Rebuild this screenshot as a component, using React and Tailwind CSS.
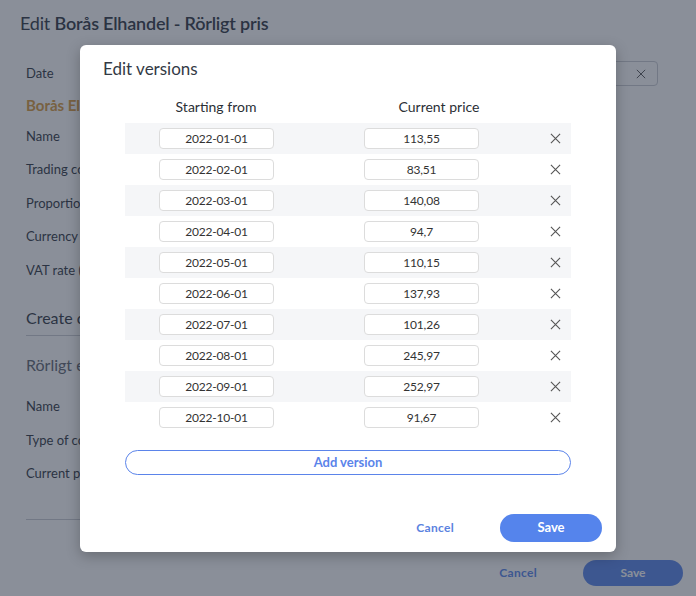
const versions = [
  ['2022-01-01', '113,55'],
  ['2022-02-01', '83,51'],
  ['2022-03-01', '140,08'],
  ['2022-04-01', '94,7'],
  ['2022-05-01', '110,15'],
  ['2022-06-01', '137,93'],
  ['2022-07-01', '101,26'],
  ['2022-08-01', '245,97'],
  ['2022-09-01', '252,97'],
  ['2022-10-01', '91,67'],
]

function CloseIcon({ className = '' }) {
  return (
    <svg viewBox="0 0 12 12" className={className} fill="none" stroke="currentColor" strokeWidth="1.2">
      <path d="M1 1l10 10M11 1L1 11" />
    </svg>
  )
}

function Field({ label }) {
  return <div className="h-[33.5px] flex items-center text-[13px] text-[#2d3440]">{label}</div>
}

function EditPage() {
  return (
    <div className="px-[26px]">
      <h1 className="pt-[11px] -ml-[6px] text-[18px] tracking-[-0.2px] text-[#2d3440] leading-[24px]">
        Edit <span className="font-semibold">Borås Elhandel - Rörligt pris</span>
      </h1>
      <div className="mt-[26px] flex items-center justify-between">
        <span className="text-[13px] text-[#2d3440]">Date</span>
        <div className="w-[80px] h-[25px] mr-[12px] border border-[#c9ccd2] rounded flex items-center justify-end pr-[11px]">
          <CloseIcon className="w-[10px] h-[10px] text-[#555]" />
        </div>
      </div>
      <div className="mt-[8px] text-[15px] font-bold text-[#d79a3c]">Borås Elhandel</div>
      <div className="mt-[3px]">
        <Field label="Name" />
        <Field label="Trading company" />
        <Field label="Proportion" />
        <Field label="Currency" />
        <Field label="VAT rate (%)" />
      </div>
      <div className="mt-[19px] w-[540px] text-[16px] text-[#2d3440] pb-[5px] border-b border-[#c9ccd2]">Create contract</div>
      <div className="mt-[17px] text-[16px] text-[#5d6470]">Rörligt elpris</div>
      <div className="mt-[13px]">
        <Field label="Name" />
        <Field label="Type of contract" />
        <Field label="Current price" />
      </div>
      <div className="mt-[28px] w-[540px] border-t border-[#c9ccd2]" />
      <div className="mt-[40px] flex justify-end items-center -mr-[13px]">
        <button className="text-[12px] font-bold tracking-wide text-[#5584ec] mr-[46px]">Cancel</button>
        <button className="w-[100px] h-[26px] rounded-full bg-[#5584ec] text-white text-[12px] font-bold">Save</button>
      </div>
    </div>
  )
}

export default function App() {
  return (
    <div className="relative w-[696px] h-[596px] overflow-hidden bg-white" style={{ fontFamily: 'Lato, "Noto Sans", sans-serif' }}>
      <EditPage />
      <div className="absolute inset-0 bg-[#2a3345]/55" />
      <div className="absolute left-[80px] top-[45px] w-[536px] h-[507px] bg-white rounded-md shadow-[0_4px_14px_rgba(0,0,0,0.25)] flex flex-col">
        <h2 className="pl-[23px] pt-[13px] text-[17px] text-[#333a45] leading-[22px]">Edit versions</h2>
        <div className="mx-[45px] mt-[15px]">
          <div className="flex h-[28px] pb-[6px] items-center text-[14px] text-[#2b2f36]">
            <div className="w-[182px] text-center">Starting from</div>
            <div className="w-[150px] ml-[57px] text-center">Current price</div>
          </div>
          {versions.map(([date, price], i) => (
            <div key={date} className={`h-[31px] flex items-center ${i % 2 === 0 ? 'bg-[#f5f6f8]' : 'bg-white'}`}>
              <div className="ml-[34px] w-[115px] h-[21px] rounded border border-[#dcdcdc] bg-white flex items-center justify-center text-[12px] tracking-[-0.2px] text-[#333]">
                {date}
              </div>
              <div className="ml-[90px] w-[115px] h-[21px] rounded border border-[#dcdcdc] bg-white flex items-center justify-center text-[12px] tracking-[-0.2px] text-[#333]">
                {price}
              </div>
              <CloseIcon className="ml-[71px] w-[11px] h-[11px] text-[#555]" />
            </div>
          ))}
          <button className="mt-[17px] w-full h-[25px] rounded-full border border-[#5b84ea] text-[13px] font-bold text-[#5b84ea]">
            Add version
          </button>
        </div>
        <div className="mt-auto mb-[10px] flex justify-end items-center pr-[14px]">
          <button className="text-[12px] font-bold tracking-wide text-[#5b82e0] mr-[46px]">Cancel</button>
          <button className="w-[102px] h-[28px] rounded-full bg-[#5584ec] text-white text-[13px] font-bold">Save</button>
        </div>
      </div>
    </div>
  )
}
